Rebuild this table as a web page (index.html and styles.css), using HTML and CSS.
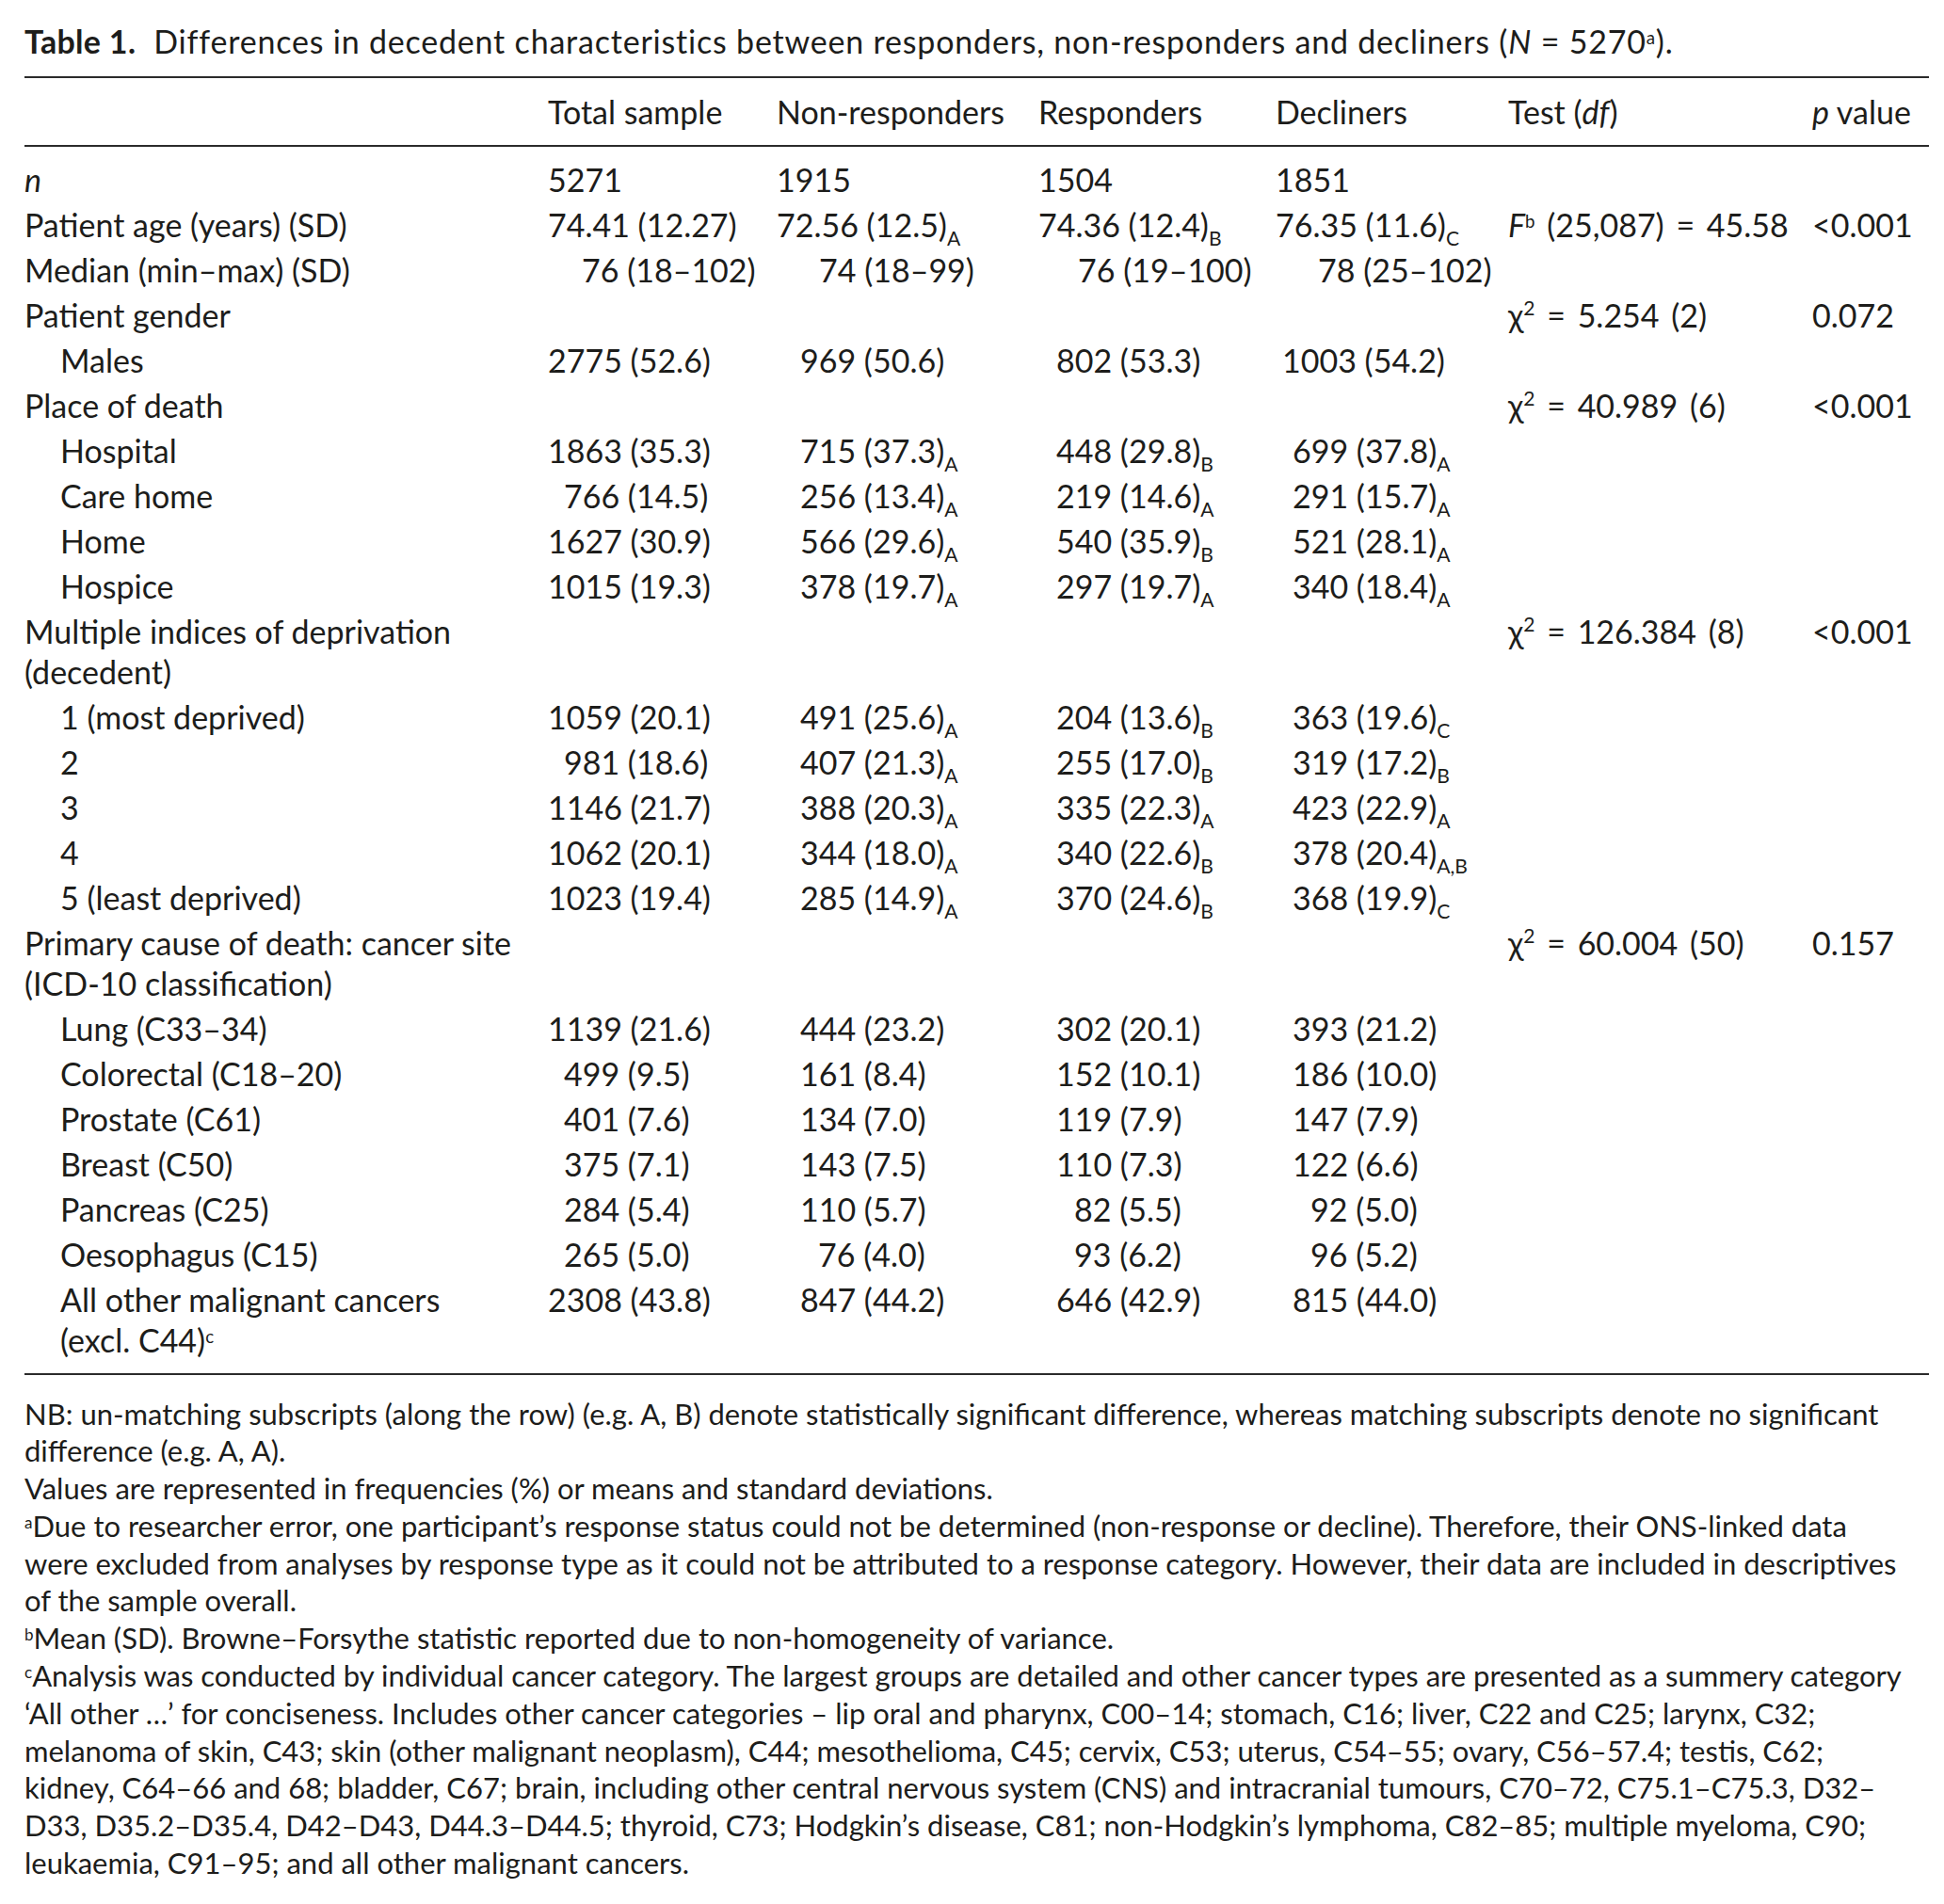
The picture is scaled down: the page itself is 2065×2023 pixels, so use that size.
FILE: index.html
```html
<!DOCTYPE html>
<html lang="en">
<head>
<meta charset="utf-8">
<title>Table 1</title>
<link rel="stylesheet" href="styles.css">
</head>
<body>
<div class="page">
  <p class="caption"><b>Table 1.</b>&nbsp; Differences in decedent characteristics between responders, non-responders and decliners (<i>N</i> = 5270<sup class="fn">a</sup>).</p>
  <table class="tbl">
    <colgroup>
      <col class="c-label"><col class="c-total"><col class="c-non"><col class="c-resp"><col class="c-decl"><col class="c-test"><col class="c-p">
    </colgroup>
    <thead>
      <tr>
        <th></th>
        <th>Total sample</th>
        <th>Non-responders</th>
        <th>Responders</th>
        <th>Decliners</th>
        <th>Test (<i>df</i>)</th>
        <th><i>p</i> value</th>
      </tr>
    </thead>
    <tbody>
      <tr class="first">
        <td><i>n</i></td><td>5271</td><td>1915</td><td>1504</td><td>1851</td><td></td><td></td>
      </tr>
      <tr>
        <td>Patient age (years) (SD)</td>
        <td>74.41 (12.27)</td>
        <td>72.56 (12.5)<sub class="g">A</sub></td>
        <td>74.36 (12.4)<sub class="g">B</sub></td>
        <td>76.35 (11.6)<sub class="g">C</sub></td>
        <td class="t"><i>F</i><sup class="fn">b</sup> (25,087) = 45.58</td>
        <td>&lt;0.001</td>
      </tr>
      <tr>
        <td>Median (min–max) (SD)</td>
        <td class="i36">76 (18–102)</td>
        <td class="i45">74 (18–99)</td>
        <td class="i42">76 (19–100)</td>
        <td class="i45">78 (25–102)</td>
        <td></td><td></td>
      </tr>
      <tr>
        <td>Patient gender</td><td></td><td></td><td></td><td></td>
        <td class="t">χ<sup class="sq">2</sup> = 5.254 (2)</td><td>0.072</td>
      </tr>
      <tr>
        <td class="sub">Males</td>
        <td>2775 (52.6)</td>
        <td class="i25">969 (50.6)</td>
        <td class="i19">802 (53.3)</td>
        <td class="i7">1003 (54.2)</td>
        <td></td><td></td>
      </tr>
      <tr>
        <td>Place of death</td><td></td><td></td><td></td><td></td>
        <td class="t">χ<sup class="sq">2</sup> = 40.989 (6)</td><td>&lt;0.001</td>
      </tr>
      <tr>
        <td class="sub">Hospital</td>
        <td>1863 (35.3)</td>
        <td class="i25">715 (37.3)<sub class="g">A</sub></td>
        <td class="i19">448 (29.8)<sub class="g">B</sub></td>
        <td class="i18">699 (37.8)<sub class="g">A</sub></td>
        <td></td><td></td>
      </tr>
      <tr>
        <td class="sub">Care home</td>
        <td class="i17">766 (14.5)</td>
        <td class="i25">256 (13.4)<sub class="g">A</sub></td>
        <td class="i19">219 (14.6)<sub class="g">A</sub></td>
        <td class="i18">291 (15.7)<sub class="g">A</sub></td>
        <td></td><td></td>
      </tr>
      <tr>
        <td class="sub">Home</td>
        <td>1627 (30.9)</td>
        <td class="i25">566 (29.6)<sub class="g">A</sub></td>
        <td class="i19">540 (35.9)<sub class="g">B</sub></td>
        <td class="i18">521 (28.1)<sub class="g">A</sub></td>
        <td></td><td></td>
      </tr>
      <tr>
        <td class="sub">Hospice</td>
        <td>1015 (19.3)</td>
        <td class="i25">378 (19.7)<sub class="g">A</sub></td>
        <td class="i19">297 (19.7)<sub class="g">A</sub></td>
        <td class="i18">340 (18.4)<sub class="g">A</sub></td>
        <td></td><td></td>
      </tr>
      <tr>
        <td>Multiple indices of deprivation<br>(decedent)</td><td></td><td></td><td></td><td></td>
        <td class="t">χ<sup class="sq">2</sup> = 126.384 (8)</td><td>&lt;0.001</td>
      </tr>
      <tr>
        <td class="sub">1 (most deprived)</td>
        <td>1059 (20.1)</td>
        <td class="i25">491 (25.6)<sub class="g">A</sub></td>
        <td class="i19">204 (13.6)<sub class="g">B</sub></td>
        <td class="i18">363 (19.6)<sub class="g">C</sub></td>
        <td></td><td></td>
      </tr>
      <tr>
        <td class="sub">2</td>
        <td class="i17">981 (18.6)</td>
        <td class="i25">407 (21.3)<sub class="g">A</sub></td>
        <td class="i19">255 (17.0)<sub class="g">B</sub></td>
        <td class="i18">319 (17.2)<sub class="g">B</sub></td>
        <td></td><td></td>
      </tr>
      <tr>
        <td class="sub">3</td>
        <td>1146 (21.7)</td>
        <td class="i25">388 (20.3)<sub class="g">A</sub></td>
        <td class="i19">335 (22.3)<sub class="g">A</sub></td>
        <td class="i18">423 (22.9)<sub class="g">A</sub></td>
        <td></td><td></td>
      </tr>
      <tr>
        <td class="sub">4</td>
        <td>1062 (20.1)</td>
        <td class="i25">344 (18.0)<sub class="g">A</sub></td>
        <td class="i19">340 (22.6)<sub class="g">B</sub></td>
        <td class="i18">378 (20.4)<sub class="g">A,B</sub></td>
        <td></td><td></td>
      </tr>
      <tr>
        <td class="sub">5 (least deprived)</td>
        <td>1023 (19.4)</td>
        <td class="i25">285 (14.9)<sub class="g">A</sub></td>
        <td class="i19">370 (24.6)<sub class="g">B</sub></td>
        <td class="i18">368 (19.9)<sub class="g">C</sub></td>
        <td></td><td></td>
      </tr>
      <tr>
        <td>Primary cause of death: cancer site<br>(ICD-10 classification)</td><td></td><td></td><td></td><td></td>
        <td class="t">χ<sup class="sq">2</sup> = 60.004 (50)</td><td>0.157</td>
      </tr>
      <tr>
        <td class="sub">Lung (C33–34)</td>
        <td>1139 (21.6)</td>
        <td class="i25">444 (23.2)</td>
        <td class="i19">302 (20.1)</td>
        <td class="i18">393 (21.2)</td>
        <td></td><td></td>
      </tr>
      <tr>
        <td class="sub">Colorectal (C18–20)</td>
        <td class="i17">499 (9.5)</td>
        <td class="i25">161 (8.4)</td>
        <td class="i19">152 (10.1)</td>
        <td class="i18">186 (10.0)</td>
        <td></td><td></td>
      </tr>
      <tr>
        <td class="sub">Prostate (C61)</td>
        <td class="i17">401 (7.6)</td>
        <td class="i25">134 (7.0)</td>
        <td class="i19">119 (7.9)</td>
        <td class="i18">147 (7.9)</td>
        <td></td><td></td>
      </tr>
      <tr>
        <td class="sub">Breast (C50)</td>
        <td class="i17">375 (7.1)</td>
        <td class="i25">143 (7.5)</td>
        <td class="i19">110 (7.3)</td>
        <td class="i18">122 (6.6)</td>
        <td></td><td></td>
      </tr>
      <tr>
        <td class="sub">Pancreas (C25)</td>
        <td class="i17">284 (5.4)</td>
        <td class="i25">110 (5.7)</td>
        <td class="i38">82 (5.5)</td>
        <td class="i37">92 (5.0)</td>
        <td></td><td></td>
      </tr>
      <tr>
        <td class="sub">Oesophagus (C15)</td>
        <td class="i17">265 (5.0)</td>
        <td class="i44">76 (4.0)</td>
        <td class="i38">93 (6.2)</td>
        <td class="i37">96 (5.2)</td>
        <td></td><td></td>
      </tr>
      <tr class="last">
        <td class="sub">All other malignant cancers<br>(excl. C44)<sup class="fn">c</sup></td>
        <td>2308 (43.8)</td>
        <td class="i25">847 (44.2)</td>
        <td class="i19">646 (42.9)</td>
        <td class="i18">815 (44.0)</td>
        <td></td><td></td>
      </tr>
    </tbody>
  </table>
  <div class="notes">
    <p>NB: un-matching subscripts (along the row) (e.g. A, B) denote statistically significant difference, whereas matching subscripts denote no significant<br>difference (e.g. A, A).</p>
    <p>Values are represented in frequencies (%) or means and standard deviations.</p>
    <p><sup class="fn">a</sup>Due to researcher error, one participant’s response status could not be determined (non-response or decline). Therefore, their ONS-linked data<br>were excluded from analyses by response type as it could not be attributed to a response category. However, their data are included in descriptives<br>of the sample overall.</p>
    <p><sup class="fn">b</sup>Mean (SD). Browne–Forsythe statistic reported due to non-homogeneity of variance.</p>
    <p><sup class="fn">c</sup>Analysis was conducted by individual cancer category. The largest groups are detailed and other cancer types are presented as a summery category<br>‘All other …’ for conciseness. Includes other cancer categories – lip oral and pharynx, C00–14; stomach, C16; liver, C22 and C25; larynx, C32;<br>melanoma of skin, C43; skin (other malignant neoplasm), C44; mesothelioma, C45; cervix, C53; uterus, C54–55; ovary, C56–57.4; testis, C62;<br>kidney, C64–66 and 68; bladder, C67; brain, including other central nervous system (CNS) and intracranial tumours, C70–72, C75.1–C75.3, D32–<br>D33, D35.2–D35.4, D42–D43, D44.3–D44.5; thyroid, C73; Hodgkin’s disease, C81; non-Hodgkin’s lymphoma, C82–85; multiple myeloma, C90;<br>leukaemia, C91–95; and all other malignant cancers.</p>
  </div>
</div>
</body>
</html>
```
FILE: styles.css
```css
html, body {
  margin: 0;
  padding: 0;
  background: #ffffff;
}
body {
  color: #1d1d1b;
  font-family: "Lato", "Liberation Sans", sans-serif;
}
.page {
  width: 2023px;
  padding: 24px 0 0 26px;
}
.caption {
  margin: 0;
  font-size: 34px;
  letter-spacing: 0.8px;
  line-height: 40px;
  white-space: nowrap;
}
.caption b {
  font-weight: 700;
  letter-spacing: 0.3px;
}
.fn {
  font-size: 0.55em;
  vertical-align: 0.55em;
  line-height: 0;
}
.sq {
  font-size: 0.62em;
  vertical-align: 0.6em;
  line-height: 0;
}
.g {
  font-size: 0.62em;
  vertical-align: -0.45em;
  line-height: 0;
}
.tbl {
  margin-top: 17px;
  width: 2023px;
  table-layout: fixed;
  border-collapse: collapse;
  font-size: 34px;
}
.c-label { width: 556px; }
.c-total { width: 243px; }
.c-non { width: 278px; }
.c-resp { width: 252px; }
.c-decl { width: 247px; }
.c-test { width: 323px; }
.c-p { width: 124px; }
.tbl thead tr {
  border-top: 2px solid #2b2b2b;
  border-bottom: 2px solid #2b2b2b;
}
.tbl th {
  font-weight: 400;
  text-align: left;
  line-height: 43px;
  padding: 14px 0 14px 0;
  white-space: nowrap;
}
.tbl td {
  vertical-align: top;
  text-align: left;
  line-height: 43px;
  padding: 2.5px 0;
  white-space: nowrap;
}
.tbl td.t {
  word-spacing: 4px;
}
.tbl tr.first td {
  padding-top: 12.5px;
}
.tbl tr.last td {
  padding-bottom: 14px;
}
.tbl tbody {
  border-bottom: 2px solid #2b2b2b;
}
.tbl td.sub {
  padding-left: 38px;
}
.i7 { padding-left: 7px !important; }
.i17 { padding-left: 17px !important; }
.i18 { padding-left: 18px !important; }
.i19 { padding-left: 19px !important; }
.i25 { padding-left: 25px !important; }
.i36 { padding-left: 36px !important; }
.i37 { padding-left: 37px !important; }
.i38 { padding-left: 38px !important; }
.i42 { padding-left: 42px !important; }
.i44 { padding-left: 44px !important; }
.i45 { padding-left: 45px !important; }
.notes {
  margin-top: 22px;
  font-size: 31px;
  line-height: 39.8px;
}
.notes p {
  margin: 0;
  white-space: nowrap;
}
```
